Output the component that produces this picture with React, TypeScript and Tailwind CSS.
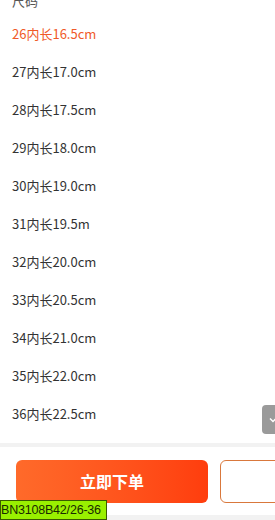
import React from 'react'

const sizes = [
    '26内长16.5cm',
    '27内长17.0cm',
    '28内长17.5cm',
    '29内长18.0cm',
    '30内长19.0cm',
    '31内长19.5m',
    '32内长20.0cm',
    '33内长20.5cm',
    '34内长21.0cm',
    '35内长22.0cm',
    '36内长22.5cm',
]

export default function App() {
    return (
        <div className="relative w-[275px] h-[520px] overflow-hidden bg-white flex flex-col font-['Noto_Sans_CJK_SC',sans-serif] text-[#333]">
            <div className="flex-1 overflow-hidden pl-[12px] flex flex-col">
                <div className="-mt-[9px] h-[33px] shrink-0 leading-[20px] text-[13px] text-[#555]">尺码</div>
                {sizes.map((s, i) => (
                    <div
                        key={s}
                        className={`h-[38px] shrink-0 leading-[20px] text-[13px] ${i === 0 ? 'text-[#f05a28]' : 'text-[#333]'}`}
                    >
                        {s}
                    </div>
                ))}
            </div>

            {/* scroll button */}
            <div className="absolute left-[262px] top-[405px] w-[20px] h-[29px] rounded-[4px] bg-[#9a9a9a] flex items-center pl-[7px]">
                <svg width="8" height="8" viewBox="0 0 8 8" fill="none" stroke="white" strokeWidth="1.5">
                    <path d="M1 2.5 L4 5.5 L7 2.5" />
                </svg>
            </div>

            {/* bottom bar */}
            <div className="h-[77px] shrink-0 bg-[#f2f2f2] pt-[4px]">
                <div className="bg-white h-[68px] flex items-center pl-[16px] gap-[12px]">
                    <button className="w-[192px] h-[43px] shrink-0 rounded-[6px] bg-gradient-to-r from-[#ff6a2a] to-[#ff3d0d] text-white text-[16px] font-bold">
                        立即下单
                    </button>
                    <button className="w-[80px] h-[43px] shrink-0 rounded-[6px] border border-[#d9783c] bg-white" />
                </div>
            </div>

            <div className="absolute left-0 bottom-0 w-[107px] h-[20px] bg-[#99f000] border border-[#3a5a00] text-[12.5px] leading-[18px] text-[#1a2a00] tracking-[-0.2px] font-['Liberation_Sans',sans-serif]">
                BN3108B42/26-36
            </div>
        </div>
    )
}
